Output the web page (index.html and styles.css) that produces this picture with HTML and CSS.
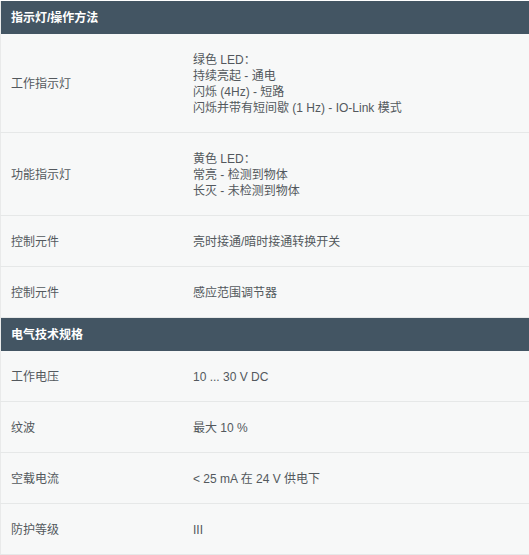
FILE: index.html
```html
<!DOCTYPE html>
<html lang="zh-CN">
<head>
    <meta charset="UTF-8">
    <meta name="viewport" content="width=device-width, initial-scale=1.0">
    <title>技术参数</title>
    <link rel="stylesheet" href="styles.css">
</head>
<body>

<!-- 技术参数表 -->
<table class="spec-table">
    <tbody>
        <tr class="spec-group">
            <th colspan="2">指示灯/操作方法</th>
        </tr>
        <tr>
            <td class="spec-label">工作指示灯</td>
            <td class="spec-value">绿色 LED：<br>持续亮起 - 通电<br>闪烁 (4Hz) - 短路<br>闪烁并带有短间歇 (1 Hz) - IO-Link 模式</td>
        </tr>
        <tr>
            <td class="spec-label">功能指示灯</td>
            <td class="spec-value">黄色 LED：<br>常亮 - 检测到物体<br>长灭 - 未检测到物体</td>
        </tr>
        <tr>
            <td class="spec-label">控制元件</td>
            <td class="spec-value">亮时接通/暗时接通转换开关</td>
        </tr>
        <tr>
            <td class="spec-label">控制元件</td>
            <td class="spec-value">感应范围调节器</td>
        </tr>

        <tr class="spec-group">
            <th colspan="2">电气技术规格</th>
        </tr>
        <tr>
            <td class="spec-label">工作电压</td>
            <td class="spec-value">10 ... 30 V DC</td>
        </tr>
        <tr>
            <td class="spec-label">纹波</td>
            <td class="spec-value">最大 10 %</td>
        </tr>
        <tr>
            <td class="spec-label">空载电流</td>
            <td class="spec-value">&lt; 25 mA 在 24 V 供电下</td>
        </tr>
        <tr>
            <td class="spec-label">防护等级</td>
            <td class="spec-value">III</td>
        </tr>
    </tbody>
</table>

</body>
</html>
```

FILE: styles.css
```css
body {
    font-family: "Liberation Sans", Arial, "Noto Sans CJK SC", sans-serif;
    background-color: #ffffff;
    margin: 0;
    padding: 1px 0 0 0;
}

/* 参数表 */
.spec-table {
    width: 100%;
    border-collapse: collapse;
    border-left: 1px solid #e9eaea;
    font-size: 12px;
    line-height: 16px;
    color: #53585d;
}

/* 分组标题 */
.spec-group th {
    background-color: #435563;
    color: #ffffff;
    font-weight: bold;
    text-align: left;
    height: 33px;
    padding: 1px 10px 0 10px;
    box-sizing: border-box;
}

.spec-table td {
    background-color: #f7f8f8;
    border-bottom: 1px solid #e6e8e8;
    padding: 18px 10px 16px 10px;
    vertical-align: middle;
}

.spec-label {
    width: 162px;
}
```
